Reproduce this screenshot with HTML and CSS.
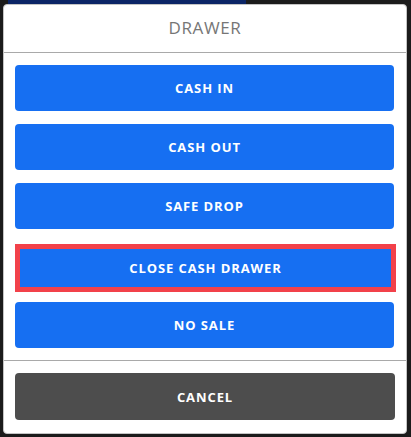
FILE: index.html
```html
<!DOCTYPE html>
<html lang="en">
<head>
    <meta charset="UTF-8">
    <meta name="viewport" content="width=device-width, initial-scale=1">
    <title>Drawer</title>
    <link rel="stylesheet" href="styles.css">
</head>
<body>
    <div class="backdrop-bar"></div>

    <div class="dialog">
        <div class="dialog-title">DRAWER</div>

        <div class="dialog-actions">
            <button class="button">CASH IN</button>
            <button class="button">CASH OUT</button>
            <button class="button">SAFE DROP</button>
            <button class="button selected">CLOSE CASH DRAWER</button>
            <button class="button">NO SALE</button>
        </div>

        <div class="dialog-footer">
            <button class="button cancel">CANCEL</button>
        </div>
    </div>
</body>
</html>
```

FILE: styles.css
```css
body {
    background-color: #1b1b1b;
    font-family: "Open Sans", Arial, sans-serif;
    margin: 0;
    padding: 0;
}

/* page behind the modal */
.backdrop-bar {
    width: 238px;
    height: 4px;
    margin-left: 8px;
    background-color: #0b2566;
}

/* Modal */
.dialog {
    width: 402px;
    height: 428px;
    margin-left: 3px;
    background-color: white;
    border: 1px solid #c4c4c4;
    border-radius: 4px;
    display: flex;
    flex-direction: column;
    box-sizing: content-box;
}

.dialog-title {
    height: 47px;
    line-height: 46px;
    text-align: center;
    font-family: "Open Sans", sans-serif;
    font-size: 17px;
    letter-spacing: 0.6px;
    color: #767676;
    border-bottom: 1px solid #a9a9a9;
}

.dialog-actions {
    display: flex;
    flex-direction: column;
    gap: 13px;
    padding: 12px 12px 12px 11px;
    border-bottom: 1px solid #a9a9a9;
}

.dialog-footer {
    padding: 12px 12px 12px 11px;
}

.button {
    display: block;
    width: 379px;
    height: 46px;
    background-color: #166ff2;
    color: white;
    border: none;
    border-radius: 4px;
    font-family: "Open Sans", sans-serif;
    font-weight: 700;
    font-size: 13px;
    letter-spacing: 0.9px;
    text-align: center;
    cursor: pointer;
    padding: 0;
}

.button.selected {
    width: 381px;
    height: 48px;
    margin-top: 2px;
    margin-bottom: -3px;
    border: 5px solid #f2414a;
    border-radius: 0;
}

.button.cancel {
    width: 380px;
    height: 47px;
    background-color: #4d4d4d;
}
```
